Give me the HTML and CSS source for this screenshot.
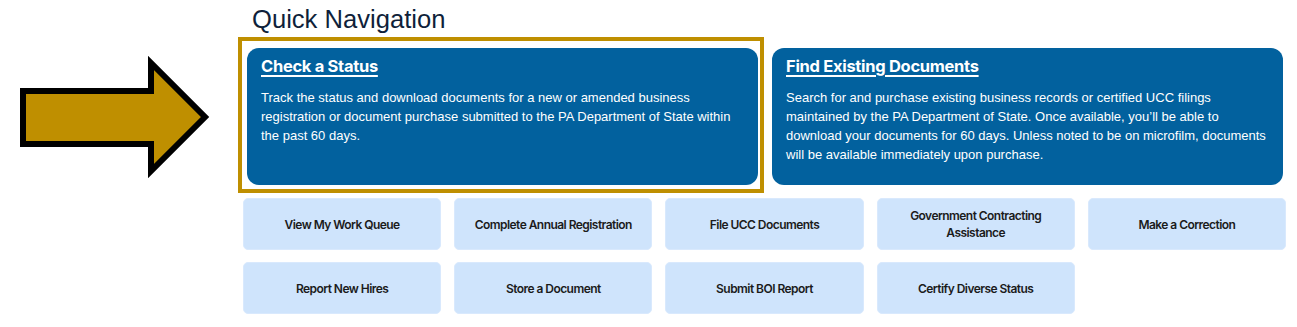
FILE: index.html
```html
<!DOCTYPE html>
<html lang="en">
<head>
<meta charset="utf-8">
<title>Quick Navigation</title>
<link rel="stylesheet" href="styles.css">
</head>
<body>
<div class="page">
  <div class="pointer">
    <svg class="arrow" width="243" height="190" viewBox="0 0 243 190" aria-hidden="true">
      <polygon points="23,91 151,91 151,63 205,117 151,171 151,144 23,144" fill="#bf8f00" stroke="#000" stroke-width="6" stroke-linejoin="miter"/>
    </svg>
  </div>
  <main class="main">
    <h1 class="heading">Quick Navigation</h1>
    <div class="cards">
      <div class="card-wrap highlighted">
        <a class="card" href="#">
          <span class="card-title">Check a Status</span>
          <span class="card-text">Track the status and download documents for a new or amended business registration or document purchase submitted to the PA Department of State within the past 60 days.</span>
        </a>
      </div>
      <div class="card-wrap">
        <a class="card" href="#">
          <span class="card-title">Find Existing Documents</span>
          <span class="card-text">Search for and purchase existing business records or certified UCC filings maintained by the PA Department of State. Once available, you’ll be able to download your documents for 60 days. Unless noted to be on microfilm, documents will be available immediately upon purchase.</span>
        </a>
      </div>
    </div>
    <div class="links">
      <a class="link" href="#">View My Work Queue</a>
      <a class="link" href="#">Complete Annual Registration</a>
      <a class="link" href="#">File UCC Documents</a>
      <a class="link" href="#">Government Contracting Assistance</a>
      <a class="link" href="#">Make a Correction</a>
      <a class="link" href="#">Report New Hires</a>
      <a class="link" href="#">Store a Document</a>
      <a class="link" href="#">Submit BOI Report</a>
      <a class="link" href="#">Certify Diverse Status</a>
    </div>
  </main>
</div>
</body>
</html>
```

FILE: styles.css
```css
html, body {
  margin: 0;
  padding: 0;
  background: #ffffff;
}

.page {
  display: flex;
  width: 1297px;
}

.pointer {
  width: 243px;
  flex: 0 0 243px;
}

.arrow {
  display: block;
}

.main {
  width: 1043px;
  flex: 0 0 1043px;
  padding-top: 4px;
}

.heading {
  margin: 0 0 0 9px;
  font-family: "Liberation Sans", Arial, sans-serif;
  font-weight: 400;
  font-size: 25.6px;
  line-height: 30px;
  color: #0f1f3a;
}

.cards {
  display: grid;
  grid-template-columns: 511px 511px;
  column-gap: 14px;
  margin: 14px 3px 0 4px;
}

.card-wrap {
  position: relative;
}

.highlighted::after {
  content: "";
  position: absolute;
  left: -9px;
  top: -11px;
  right: -6px;
  bottom: -8px;
  border: 4px solid #bf8f00;
  pointer-events: none;
}

.card {
  display: flex;
  flex-direction: column;
  box-sizing: border-box;
  height: 137px;
  padding: 7px 14px 0 14px;
  background: #02619e;
  border-radius: 12px;
  color: #ffffff;
  text-decoration: none;
}

.card-title {
  font-family: Inter, "Noto Sans", sans-serif;
  font-weight: 700;
  font-size: 16.5px;
  line-height: 22px;
  letter-spacing: -0.3px;
  text-decoration: underline;
  text-decoration-thickness: 2px;
  text-underline-offset: 3px;
}

.card-text {
  margin-top: 11px;
  font-family: "Liberation Sans", Arial, sans-serif;
  font-size: 13px;
  line-height: 19px;
}

.links {
  display: grid;
  grid-template-columns: repeat(5, 1fr);
  column-gap: 13px;
  row-gap: 12px;
  margin-top: 13px;
}

.link {
  display: flex;
  align-items: center;
  justify-content: center;
  box-sizing: border-box;
  height: 52px;
  padding: 0 14px;
  background: #cfe4fc;
  border: 1px solid #d9e9fd;
  border-radius: 5px;
  text-align: center;
  font-family: Inter, "Noto Sans", sans-serif;
  font-weight: 600;
  font-size: 12px;
  line-height: 17px;
  letter-spacing: -0.55px;
  color: #1b1b1b;
  text-decoration: none;
}
```
